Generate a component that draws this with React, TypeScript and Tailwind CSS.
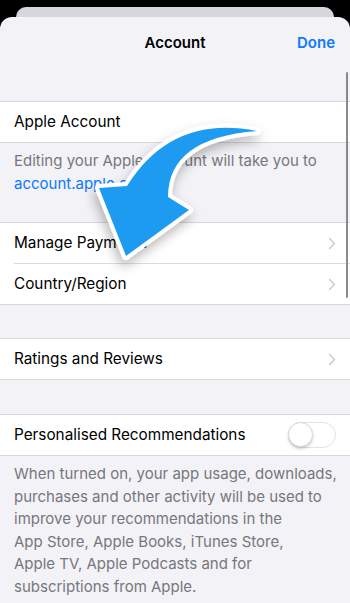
import React from "react";

const font = { fontFamily: "Inter, 'Noto Sans', sans-serif" };

const Chevron: React.FC = () => (
  <svg width="8" height="13" viewBox="0 0 8 13" className="shrink-0">
    <path d="M1.5 1.5 L6.5 6.5 L1.5 11.5" fill="none" stroke="#c4c4c9" strokeWidth="1.3" strokeLinecap="round" strokeLinejoin="round" />
  </svg>
);

const Row: React.FC<{ label: string; chevron?: boolean; children?: React.ReactNode }> = ({ label, chevron, children }) => (
  <div className="h-[40px] flex items-center justify-between pr-[14px]">
    <span className="text-[15.3px] text-black">{label}</span>
    {chevron && <Chevron />}
    {children}
  </div>
);

const Toggle: React.FC = () => (
  <div className="relative w-[48px] h-[26px] rounded-full bg-white border-[1.5px] border-[#e2e2e5]">
    <div className="absolute left-[-1px] top-[-1px] w-[25px] h-[25px] rounded-full bg-white border border-[#d6d6d9] shadow-[0_2px_3px_rgba(0,0,0,0.18)]" />
  </div>
);

const Arrow: React.FC = () => (
  <svg className="absolute inset-0 pointer-events-none" width="350" height="603" viewBox="0 0 350 603">
    <defs>
      <filter id="sh" x="-30%" y="-30%" width="160%" height="160%">
        <feDropShadow dx="-2" dy="6" stdDeviation="6" floodColor="#000" floodOpacity="0.28" />
      </filter>
    </defs>
    <path
      d="M257 131 Q172 114 127 186 L99 188 L126 256 L189 210 L168 197 Q168 138 257 131 Z"
      fill="#1d9bf0"
      stroke="#ffffff"
      strokeWidth="8"
      strokeLinejoin="round"
      paintOrder="stroke"
      filter="url(#sh)"
    />
  </svg>
);

export default function App() {
  return (
    <div className="relative w-[350px] h-[603px] overflow-hidden bg-black" style={font}>
      <div className="pt-[7px]">
        <div className="mx-[16px] h-[10px] rounded-t-[10px] bg-[#d6d6db]" />
        <div className="rounded-t-[12px] bg-[#f2f2f7] h-[600px]">
          <div className="relative h-[52px] flex items-center justify-center">
            <span className="text-[15px] font-semibold text-black">Account</span>
            <span className="absolute right-[15px] text-[15px] font-semibold text-[#0a7aff]">Done</span>
          </div>
          <div className="h-[32px]" />

          <div className="bg-white border-y border-[#d8d8dc] pl-[14px]">
            <Row label="Apple Account" />
          </div>
          <div className="h-[79px] px-[14px] pt-[7px] text-[15px] leading-[22.5px] text-[#77777c]">
            Editing your Apple Account will take you to{" "}
            <span className="text-[#0a7aff]">account.apple.com</span>
          </div>

          <div className="bg-white border-y border-[#d8d8dc] pl-[14px]">
            <div className="border-b border-[#dcdce0]">
              <Row label="Manage Payments" chevron />
            </div>
            <Row label="Country/Region" chevron />
          </div>
          <div className="h-[33px]" />

          <div className="bg-white border-y border-[#d8d8dc] pl-[14px]">
            <Row label="Ratings and Reviews" chevron />
          </div>
          <div className="h-[34px]" />

          <div className="bg-white border-y border-[#d8d8dc] pl-[14px]">
            <Row label="Personalised Recommendations">
              <Toggle />
            </Row>
          </div>
          <div className="px-[14px] pt-[7px] pr-[10px] text-[15px] leading-[22.5px] text-[#77777c]">
            When turned on, your app usage, downloads, purchases and other activity will be used to improve your
            recommendations in the <br />
            App Store, Apple Books, iTunes Store, <br />
            Apple TV, Apple Podcasts and for <br />
            subscriptions from Apple.
          </div>
        </div>
      </div>

      <div className="absolute right-[2px] top-[72px] w-[2.5px] h-[226px] rounded-full bg-[#8a8a8e]" />
      <Arrow />
    </div>
  );
}
